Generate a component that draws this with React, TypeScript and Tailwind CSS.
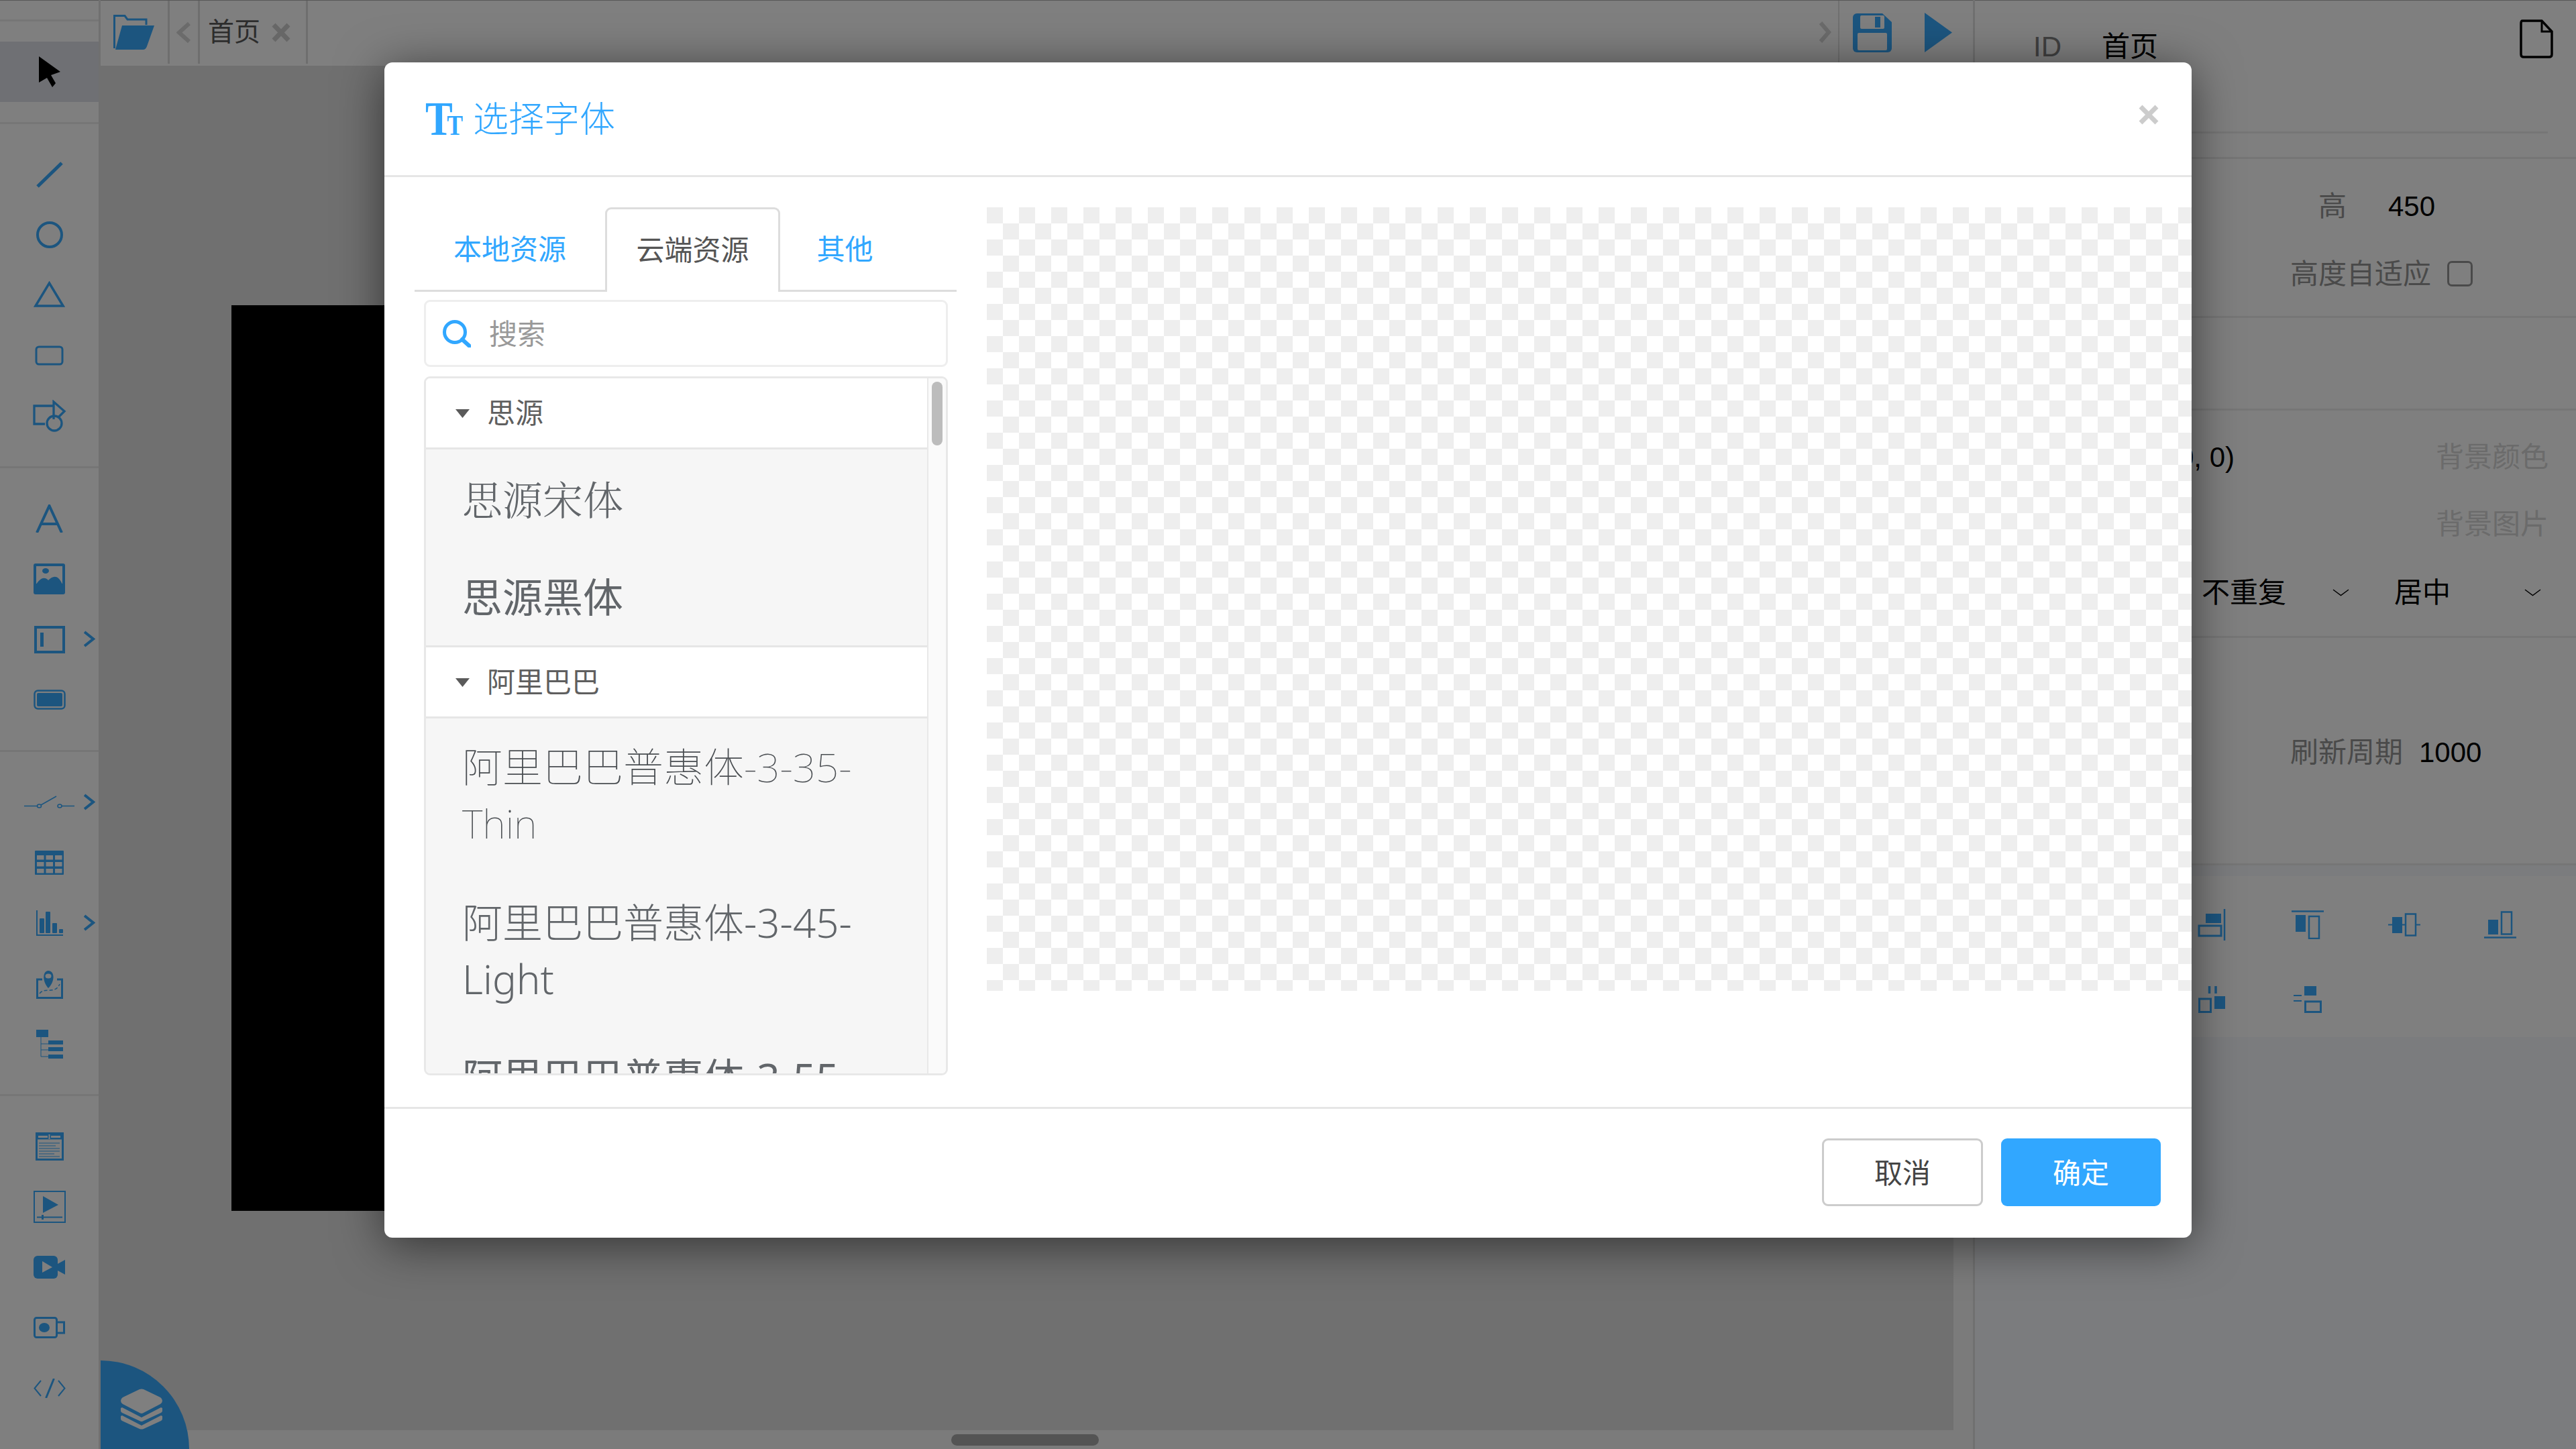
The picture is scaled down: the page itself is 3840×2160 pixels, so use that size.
import type { ReactNode } from "react";

const BLUE = "#38aaff";

function Cursor() {
  return (
    <svg viewBox="0 0 32 46" className="h-[46px] w-[32px]">
      <path d="M0 0 32 23 18 28 25 40 20 46 12 32 0 39Z" fill="#000" />
    </svg>
  );
}

const tools: { icon: ReactNode; more?: boolean }[][] = [
  [
    {
      icon: (
        <svg viewBox="0 0 40 39" className="h-[39px] w-[40px]">
          <path d="M2 37 38 2" stroke={BLUE} strokeWidth="5" />
        </svg>
      ),
    },
    {
      icon: (
        <svg viewBox="0 0 40 40" className="h-[40px] w-[40px]">
          <circle cx="20" cy="20" r="18" fill="none" stroke={BLUE} strokeWidth="4" />
        </svg>
      ),
    },
    {
      icon: (
        <svg viewBox="0 0 47 39" className="-mt-[3px] h-[39px] w-[47px]">
          <path d="M23.5 3 44 37H3Z" fill="none" stroke={BLUE} strokeWidth="3.5" />
        </svg>
      ),
    },
    {
      icon: (
        <svg viewBox="0 0 43 30" className="h-[30px] w-[43px]">
          <rect x="2" y="2" width="39" height="26" rx="4" fill="none" stroke={BLUE} strokeWidth="3" />
        </svg>
      ),
    },
    {
      icon: (
        <svg viewBox="0 0 50 48" fill="none" stroke={BLUE} strokeWidth="3.3" className="h-[48px] w-[50px]">
          <path d="M30 9H2V36H18" />
          <path d="M31 29V3L47 17 38 26" />
          <circle cx="32" cy="35" r="11" />
        </svg>
      ),
    },
  ],
  [
    {
      icon: (
        <svg viewBox="0 0 41 42" className="h-[42px] w-[41px]">
          <path d="M2 42 20.5 2 39 42M9 29H32" fill="none" stroke={BLUE} strokeWidth="4" />
        </svg>
      ),
    },
    {
      icon: (
        <svg viewBox="0 0 47 46" className="h-[46px] w-[47px]">
          <rect width="47" height="46" rx="3" fill={BLUE} />
          <rect x="4" y="4" width="39" height="26" fill="#fff" />
          <ellipse cx="18" cy="11" rx="5" ry="4" fill={BLUE} />
          <path d="M4 31C11 20 17 20 22 25 28 19 36 15 43 31V38H4Z" fill={BLUE} />
        </svg>
      ),
    },
    {
      more: true,
      icon: (
        <svg viewBox="0 0 46 41" className="h-[41px] w-[46px]">
          <rect x="2" y="2" width="42" height="37" fill="none" stroke={BLUE} strokeWidth="4" />
          <rect x="9" y="10" width="5" height="21" fill={BLUE} />
        </svg>
      ),
    },
    {
      icon: (
        <svg viewBox="0 0 48 30" className="h-[30px] w-[48px]">
          <rect x="1.5" y="1.5" width="45" height="27" rx="5" fill="none" stroke={BLUE} strokeWidth="2.5" />
          <rect x="5" y="5" width="38" height="20" rx="2" fill={BLUE} />
        </svg>
      ),
    },
  ],
  [
    {
      more: true,
      icon: (
        <svg viewBox="0 0 75 20" fill="none" stroke={BLUE} strokeWidth="1.5" className="h-[20px] w-[75px]">
          <path d="M0 15.5H20M25 14 48 1M56 15.5H75" />
          <ellipse cx="22.5" cy="15.5" rx="3" ry="2.5" />
          <ellipse cx="53" cy="15.5" rx="3" ry="2.5" />
        </svg>
      ),
    },
    {
      icon: (
        <svg viewBox="0 0 43 36" className="h-[36px] w-[43px]">
          <rect width="43" height="36" rx="1" fill={BLUE} />
          {[7, 17, 27].map((y) =>
            [3, 16.5, 30].map((x) => <rect key={`${x}-${y}`} x={x} y={y} width="10.5" height="6.5" fill="#fff" />),
          )}
        </svg>
      ),
    },
    {
      more: true,
      icon: (
        <svg viewBox="0 0 40 38" className="h-[38px] w-[40px]">
          <path d="M1 0V37H40" fill="none" stroke={BLUE} strokeWidth="2" />
          <rect x="5" y="12" width="7" height="22" rx="1" fill={BLUE} />
          <rect x="14" y="2" width="7" height="32" rx="1" fill={BLUE} />
          <rect x="24" y="19" width="7" height="15" rx="1" fill={BLUE} />
          <rect x="34" y="28" width="6" height="6" rx="1" fill={BLUE} />
        </svg>
      ),
    },
    {
      icon: (
        <svg viewBox="0 0 40 42" className="mt-[3px] h-[42px] w-[40px]">
          <path d="M9 13H1.5V40.5H38.5V13H31" fill="none" stroke={BLUE} strokeWidth="3" />
          <path d="M5 34C12 24 28 36 35 20" fill="none" stroke={BLUE} strokeWidth="1.5" strokeDasharray="5 3" />
          <path d="M18 26C8 15 10 0 18 0 27 0 29 15 18 26Z" fill={BLUE} />
          <ellipse cx="18" cy="8" rx="4.5" ry="3.5" fill="#fff" />
        </svg>
      ),
    },
    {
      icon: (
        <svg viewBox="0 0 40 43" className="h-[43px] w-[40px]">
          <rect width="18" height="11" fill={BLUE} />
          <path d="M7 11V40H18M7 21H18M7 30H18" fill="none" stroke={BLUE} strokeWidth="1" />
          <rect x="18" y="16" width="22" height="6" fill={BLUE} />
          <rect x="18" y="26" width="22" height="6" fill={BLUE} />
          <rect x="18" y="37" width="22" height="6" fill={BLUE} />
        </svg>
      ),
    },
  ],
  [
    {
      icon: (
        <svg viewBox="0 0 42 42" className="h-[42px] w-[42px]">
          <rect x="1.5" y="1.5" width="39" height="39" fill="none" stroke={BLUE} strokeWidth="3" />
          <rect x="1.5" y="1.5" width="39" height="9" fill={BLUE} />
          <rect x="19.5" y="3" width="2" height="7" fill="#fff" />
          <rect x="4" y="5" width="14" height="3" fill="#fff" />
          <rect x="23" y="5" width="14" height="3" fill="#fff" />
          <path d="M5 16H36M5 20H30M5 24H36M5 28H36M5 32H28M5 36H36" stroke={BLUE} strokeWidth="1" />
        </svg>
      ),
    },
    {
      icon: (
        <svg viewBox="0 0 48 48" className="h-[48px] w-[48px]">
          <rect x="1" y="1" width="46" height="46" fill="none" stroke={BLUE} strokeWidth="2" />
          <path d="M14 8 37 21 14 33Z" fill={BLUE} />
          <path d="M5 39.5H43" stroke={BLUE} strokeWidth="2" />
          <rect x="12" y="36" width="3" height="7" fill={BLUE} />
        </svg>
      ),
    },
    {
      icon: (
        <svg viewBox="0 0 47 34" className="h-[34px] w-[47px]">
          <rect width="36" height="34" rx="6" fill={BLUE} />
          <path d="M36 12 47 6V28L36 22Z" fill={BLUE} />
          <path d="M13 8 28 17 13 25Z" fill="#fff" />
        </svg>
      ),
    },
    {
      icon: (
        <svg viewBox="0 0 48 32" className="h-[32px] w-[48px]">
          <rect x="1.5" y="1.5" width="33" height="29" rx="3" fill="none" stroke={BLUE} strokeWidth="3" />
          <ellipse cx="16" cy="16" rx="8" ry="7" fill={BLUE} />
          <path d="M35 8H45.5V24H35" fill="none" stroke={BLUE} strokeWidth="3" />
        </svg>
      ),
    },
    {
      icon: (
        <svg viewBox="0 0 48 29" fill="none" stroke={BLUE} className="h-[29px] w-[48px]">
          <path d="M11 3 1.5 14.5 11 26M37 3 46.5 14.5 37 26" strokeWidth="2" />
          <path d="M30 1 19 28" strokeWidth="3" strokeLinecap="round" />
        </svg>
      ),
    },
  ],
];

function Chevron() {
  return (
    <svg viewBox="0 0 17 27" className="h-[27px] w-[17px]">
      <path d="M1 3 14 13.5 1 24" fill="none" stroke={BLUE} strokeWidth="4" />
    </svg>
  );
}

function Tool({ icon, more }: { icon: ReactNode; more?: boolean }) {
  return (
    <div className="relative flex h-[90px] items-center justify-center">
      {icon}
      {more && (
        <span className="absolute right-[5px] top-[31px]">
          <Chevron />
        </span>
      )}
    </div>
  );
}

function Toolbar() {
  return (
    <aside className="flex h-full w-[150px] shrink-0 flex-col border-r-[3px] border-[#e0e0e0] bg-white">
      <div className="h-[32px] border-b-[3px] border-t border-[#ececec] border-t-[#b0b0b0]" />
      <div className="border-b-[3px] border-[#ececec] py-[30px]">
        <div className="flex h-[90px] items-center justify-center bg-[#dee0e8]">
          <Cursor />
        </div>
      </div>
      {tools.map((group, i) => (
        <div key={i} className="border-b-[3px] border-[#ececec] py-[30px] last:border-b-0">
          {group.map((t, j) => (
            <Tool key={j} {...t} />
          ))}
        </div>
      ))}
    </aside>
  );
}

function TopBar() {
  return (
    <div className="flex h-[98px] shrink-0 border-t border-[#b0b0b0] bg-white pb-[3px]">
      <div className="flex w-[100px] items-center pl-[19px]">
        <svg viewBox="0 0 61 52" className="h-[52px] w-[61px]">
          <path d="M1.5 50V1.5H17L21 7H49V15" fill="none" stroke={BLUE} strokeWidth="3" />
          <path d="M13 16H61L50 47C49 50 47 52 44 52H3Z" fill={BLUE} />
        </svg>
      </div>
      <div className="flex w-[45px] items-center justify-center border-l-[3px] border-[#dcdcdc]">
        <svg viewBox="0 0 22 33" className="h-[33px] w-[22px]">
          <path d="M19 3 4 16.5 19 30" fill="none" stroke="#d6d6d6" strokeWidth="6" />
        </svg>
      </div>
      <div className="flex w-[164px] items-center gap-[17px] border-x-[3px] border-[#dcdcdc] pl-[12px] text-[39px] text-[#5a5a5a]">
        首页
        <svg viewBox="0 0 28 29" className="h-[29px] w-[28px]">
          <path d="M3 3 25 26M25 3 3 26" stroke="#cfcfcf" strokeWidth="7" />
        </svg>
      </div>
      <div className="flex flex-1 items-center justify-end">
        <svg viewBox="0 0 23 34" className="mr-[9px] h-[34px] w-[23px]">
          <path d="M6 3 18 17 6 31" fill="none" stroke="#d6d6d6" strokeWidth="6" />
        </svg>
        <div className="flex h-full w-[201px] items-center border-l-[2px] border-[#e0e0e0] pl-[20px]">
          <svg viewBox="0 0 58 58" className="mt-[2px] h-[58px] w-[58px]">
            <path d="M6 0H44L58 13V52A6 6 0 0 1 52 58H6A6 6 0 0 1 0 52V6A6 6 0 0 1 6 0Z" fill={BLUE} />
            <rect x="11" y="3" width="36" height="20" rx="2" fill="#fff" />
            <rect x="33" y="5" width="8" height="16" fill={BLUE} />
            <rect x="7" y="29" width="44" height="26" rx="2" fill="#fff" />
          </svg>
          <svg viewBox="0 0 41 59" className="ml-[49px] h-[59px] w-[41px]">
            <path d="M0 0 41 29.5 0 59Z" fill={BLUE} />
          </svg>
        </div>
      </div>
    </div>
  );
}

function Workspace() {
  return (
    <main className="relative flex h-full w-[2791px] shrink-0 flex-col">
      <TopBar />
      <div className="flex min-h-0 flex-1">
        <div className="min-w-0 flex-1 overflow-hidden bg-[#e0e0e0] pl-[195px] pt-[357px]">
          <div className="h-[1350px] w-[2400px] bg-black" />
        </div>
        <div className="w-[29px] shrink-0 bg-[#f6f6f6]" />
      </div>
      <div className="h-[28px] shrink-0 bg-[#f6f6f6] pl-[1268px] pt-[6px]">
        <div className="h-[17px] w-[220px] rounded-full bg-[#a8a8a8]" />
      </div>
      <div className="absolute bottom-0 left-0 flex h-[132px] w-[132px] items-end rounded-br-[10px] rounded-tl-[12px] rounded-tr-full bg-[#38aaff] pb-[29px] pl-[30px]">
        <svg viewBox="0 0 62 61" fill="#fff" className="h-[61px] w-[62px]">
          <path d="M28 1Q31 0 34 1L59 13Q62 15 62 18 62 21 59 23L34 36Q31 38 28 36L3 23Q0 21 0 18 0 15 3 13Z" />
          <path d="M0 29 2 28 31 43 60 28 62 29V33Q62 35 60 36L34 48Q31 50 28 48L2 36Q0 35 0 33Z" />
          <path d="M0 41 2 40 31 55 60 40 62 41V45Q62 47 60 48L34 60Q31 61 28 60L2 48Q0 47 0 45Z" />
        </svg>
      </div>
    </main>
  );
}

const alignIcons = [
  <svg key="r" viewBox="0 0 42 47" className="h-[47px] w-[42px]" fill="none" stroke={BLUE}>
    <path d="M40 0V47" strokeWidth="2.5" />
    <rect x="12" y="7" width="23" height="14" fill={BLUE} stroke="none" />
    <rect x="2" y="25" width="33" height="15" strokeWidth="3" />
  </svg>,
  <svg key="t" viewBox="0 0 48 43" className="h-[43px] w-[48px]" fill="none" stroke={BLUE}>
    <path d="M0 1.5H48" strokeWidth="2.5" />
    <rect x="6" y="7" width="15" height="25" fill={BLUE} stroke="none" />
    <rect x="26" y="9" width="15" height="33" strokeWidth="2.5" />
  </svg>,
  <svg key="m" viewBox="0 0 48 35" className="h-[35px] w-[48px]" fill="none" stroke={BLUE}>
    <path d="M0 17.5H48" strokeWidth="2" />
    <rect x="6" y="6" width="15" height="24" fill={BLUE} stroke="none" />
    <rect x="26" y="1.5" width="15" height="32" fill="#fff" strokeWidth="2.5" />
  </svg>,
  <svg key="b" viewBox="0 0 48 41" className="h-[41px] w-[48px]" fill="none" stroke={BLUE}>
    <path d="M0 39.5H48" strokeWidth="2.5" />
    <rect x="6" y="13" width="15" height="22" fill={BLUE} stroke="none" />
    <rect x="26" y="1.5" width="15" height="33" strokeWidth="2.5" />
  </svg>,
  <svg key="h" viewBox="0 0 40 40" className="h-[40px] w-[40px]" fill="none" stroke={BLUE}>
    <rect x="1.5" y="19" width="17" height="19.5" strokeWidth="3" />
    <rect x="24" y="15" width="16" height="19" fill={BLUE} stroke="none" />
    <path d="M16.5 0V11M26 0V11" strokeWidth="3.5" />
  </svg>,
  <svg key="v" viewBox="0 0 42 40" className="h-[40px] w-[42px]" fill="none" stroke={BLUE}>
    <rect x="16" y="0" width="18" height="14" fill={BLUE} stroke="none" />
    <rect x="17.5" y="23" width="23" height="15.5" strokeWidth="3" />
    <path d="M0 14H12M0 22H12" strokeWidth="2" />
  </svg>,
];

function Down() {
  return (
    <svg viewBox="0 0 25 11" className="h-[11px] w-[25px]">
      <path d="M1 1 12.5 9.5 24 1" fill="none" stroke="#000" strokeWidth="1.5" />
    </svg>
  );
}

function Panel() {
  return (
    <aside className="flex h-full min-w-0 flex-1 flex-col border-l-[3px] border-[#e0e0e0] bg-[#f6f8fc] text-[42px]">
      <div className="h-[237px] shrink-0 border-b-[3px] border-t border-[#ececec] border-t-[#b0b0b0] bg-white">
        <div className="flex h-[136px] items-center pl-[87px] pr-[34px]">
          <span className="w-[102px] text-[#808080]">ID</span>
          <span className="flex-1 text-black">首页</span>
          <svg viewBox="0 0 50 59" className="mb-[22px] h-[59px] w-[50px]">
            <path d="M4 2H33L48 18V52C48 55 46 56 44 56H6C4 56 2 55 2 52V6C2 3 3 2 4 2Z" fill="none" stroke="#000" strokeWidth="3.5" />
            <path d="M33 2V18H48" fill="none" stroke="#000" strokeWidth="3" />
          </svg>
        </div>
        <div className="ml-[46px] mr-[42px] mt-[59px] h-[3px] bg-[#ececec]" />
      </div>
      <div className="h-[237px] shrink-0 border-b-[3px] border-[#ececec] bg-white pl-[512px] pt-[28px]">
        <div className="flex h-[84px] items-center text-[#949494]">
          高<span className="ml-[62px] text-black">450</span>
        </div>
        <div className="-ml-[42px] mt-[17px] flex h-[84px] items-center gap-[24px] text-[#949494]">
          高度自适应
          <span className="h-[38px] w-[38px] rounded-[7px] border-[3px] border-[#949494]" />
        </div>
      </div>
      <div className="h-[138px] shrink-0 border-b-[3px] border-[#ececec] bg-white" />
      <div className="h-[339px] shrink-0 border-b-[3px] border-[#ececec] bg-white pt-[27px]">
        <div className="flex h-[84px] items-center">
          <span className="w-[387px] text-right text-black">rgba(0, 0, 0, 0)</span>
          <span className="ml-[300px] text-[#d6d6d6]">背景颜色</span>
        </div>
        <div className="mt-[16px] flex h-[84px] items-center pl-[687px] text-[#d6d6d6]">背景图片</div>
        <div className="mt-[18px] flex h-[84px] items-center gap-[67px] pl-[338px] text-black">
          <div className="flex w-[220px] items-center justify-between">
            不重复
            <Down />
          </div>
          <div className="flex w-[219px] items-center justify-between">
            居中
            <Down />
          </div>
        </div>
      </div>
      <div className="flex h-[339px] shrink-0 items-center gap-[24px] border-b-[3px] border-[#ececec] bg-white pl-[470px] pt-[5px]">
        <span className="text-[#949494]">刷新周期</span>
        <span className="text-black">1000</span>
      </div>
      <div className="mt-[16px] grid h-[240px] grid-cols-[repeat(4,143.5px)] grid-rows-[112px_112px] content-start bg-white pl-[281px] pt-[16px]">
        {alignIcons.map((icon, i) => (
          <div key={i} className="flex items-center justify-center">
            {icon}
          </div>
        ))}
      </div>
    </aside>
  );
}

function Caret() {
  return (
    <svg viewBox="0 0 21 14" className="h-[14px] w-[21px]">
      <path d="M0 1H21L10.5 14Z" fill="#5a5a5a" />
    </svg>
  );
}

function GroupHead({ children }: { children: ReactNode }) {
  return (
    <div className="flex h-[106px] items-center gap-[26px] border-b-[3px] border-[#e6e6e6] bg-white pl-[44px] text-[42px] text-[#5f5f5f]">
      <Caret />
      <span className="mt-[2px]">{children}</span>
    </div>
  );
}

function Item({ children, className }: { children: ReactNode; className: string }) {
  return <div className={`px-[54px] text-[60px] leading-[84px] ${className}`}>{children}</div>;
}

function FontList() {
  return (
    <div className="ml-[14px] mr-[13px] mt-[14px] flex h-[1042px] overflow-hidden rounded-[9px] border-[3px] border-[#e8e8e8]">
      <div className="min-w-0 flex-1 overflow-hidden bg-[#f6f6f6]">
        <GroupHead>思源</GroupHead>
        <Item className="pb-[31.5px] pt-[29.5px] font-['Noto_Serif_CJK_SC','Noto_Sans_CJK_SC',serif] font-light text-[#62666a]">思源宋体</Item>
        <Item className="pb-[27px] pt-[36px] text-[#62666a]">思源黑体</Item>
        <div className="border-t-[3px] border-[#e6e6e6]">
          <GroupHead>阿里巴巴</GroupHead>
        </div>
        <Item className="pb-[33px] pt-[29.5px] font-['Noto_Sans','Noto_Sans_CJK_SC',sans-serif] font-thin text-[#4a4e52]">阿里巴巴普惠体-3-35-Thin</Item>
        <Item className="py-[31.5px] font-['Noto_Sans','Noto_Sans_CJK_SC',sans-serif] font-light text-[#62666a]">阿里巴巴普惠体-3-45-Light</Item>
        <Item className="py-[31.5px] font-['Noto_Sans','Noto_Sans_CJK_SC',sans-serif] text-[#62666a]">阿里巴巴普惠体-3-55-Regular</Item>
      </div>
      <div className="w-[28px] shrink-0 border-l-[2px] border-[#e8e8e8] bg-[#fafafa] pl-[5px] pt-[5px]">
        <div className="h-[95px] w-[16px] rounded-full bg-[#bcbcbc]" />
      </div>
    </div>
  );
}

function FontDialog() {
  return (
    <div className="absolute inset-0 bg-black/50 pl-[573px] pt-[93px]">
      <div className="flex h-[1752px] w-[2694px] flex-col rounded-[12px] bg-white shadow-[0_10px_70px_rgba(0,0,0,0.55)]">
        <div className="flex h-[171px] shrink-0 items-center justify-between border-b-[3px] border-[#e6e6e6] pl-[61px] pr-[49px]">
          <div className="flex items-center text-[#31a7ff]">
            <span className="w-[71px] origin-left scale-x-[0.85]">
              <span className="inline-block font-['Liberation_Serif',serif] text-[42px] font-bold leading-none tracking-[-10px] first-letter:text-[72px]">TT</span>
            </span>
            <span className="mt-[3px] text-[53px] font-light">选择字体</span>
          </div>
          <svg viewBox="0 0 30 30" className="mb-[12px] h-[30px] w-[30px]">
            <path d="M3 3 27 27M27 3 3 27" stroke="#cccccc" strokeWidth="7" />
          </svg>
        </div>
        <div className="flex min-h-0 flex-1 pl-[45px] pt-[45px]">
          <div className="w-[808px] shrink-0">
            <div className="flex h-[126px] border-b-[3px] border-[#dddddd] text-[42px]">
              <div className="flex w-[284px] items-center justify-center pt-[3px] text-[#31a7ff]">本地资源</div>
              <div className="-mb-[3px] flex h-[126px] w-[261px] items-center justify-center rounded-t-[9px] border-x-[3px] border-t-[3px] border-[#dddddd] bg-white text-[#555555]">
                云端资源
              </div>
              <div className="flex w-[193px] items-center justify-center pt-[3px] text-[#31a7ff]">其他</div>
            </div>
            <div className="ml-[14px] mr-[13px] mt-[12px] flex h-[100px] items-center gap-[27px] rounded-[9px] border-[3px] border-[#eeeeee] pl-[24px] text-[42px] text-[#999999]">
              <svg viewBox="0 0 43 41" className="h-[41px] w-[43px]">
                <circle cx="19" cy="18" r="15.5" fill="none" stroke="#31a7ff" strokeWidth="5" />
                <path d="M30 29 41 39" stroke="#31a7ff" strokeWidth="6" strokeLinecap="round" />
              </svg>
              <span className="mt-[3px]">搜索</span>
            </div>
            <FontList />
          </div>
          <div className="ml-[45px] h-[1168px] min-w-0 flex-1 bg-[conic-gradient(#fff_25%,#eee_0_50%,#fff_0_75%,#eee_0)] bg-[length:48px_48px]" />
        </div>
        <div className="flex h-[195px] shrink-0 items-start justify-end gap-[27px] border-t-[3px] border-[#e6e6e6] pr-[46px] pt-[44px] text-[42px]">
          <div className="flex h-[101px] w-[240px] items-center justify-center rounded-[9px] border-[3px] border-[#cccccc] pt-[3px] text-[#444444]">取消</div>
          <div className="flex h-[101px] w-[238px] items-center justify-center rounded-[9px] bg-[#31a7ff] pt-[3px] text-white">确定</div>
        </div>
      </div>
    </div>
  );
}

export default function App() {
  return (
    <div className="relative flex h-[2160px] w-[3840px] overflow-hidden font-['Liberation_Sans','Noto_Sans_CJK_SC',sans-serif]">
      <Toolbar />
      <Workspace />
      <Panel />
      <FontDialog />
    </div>
  );
}
